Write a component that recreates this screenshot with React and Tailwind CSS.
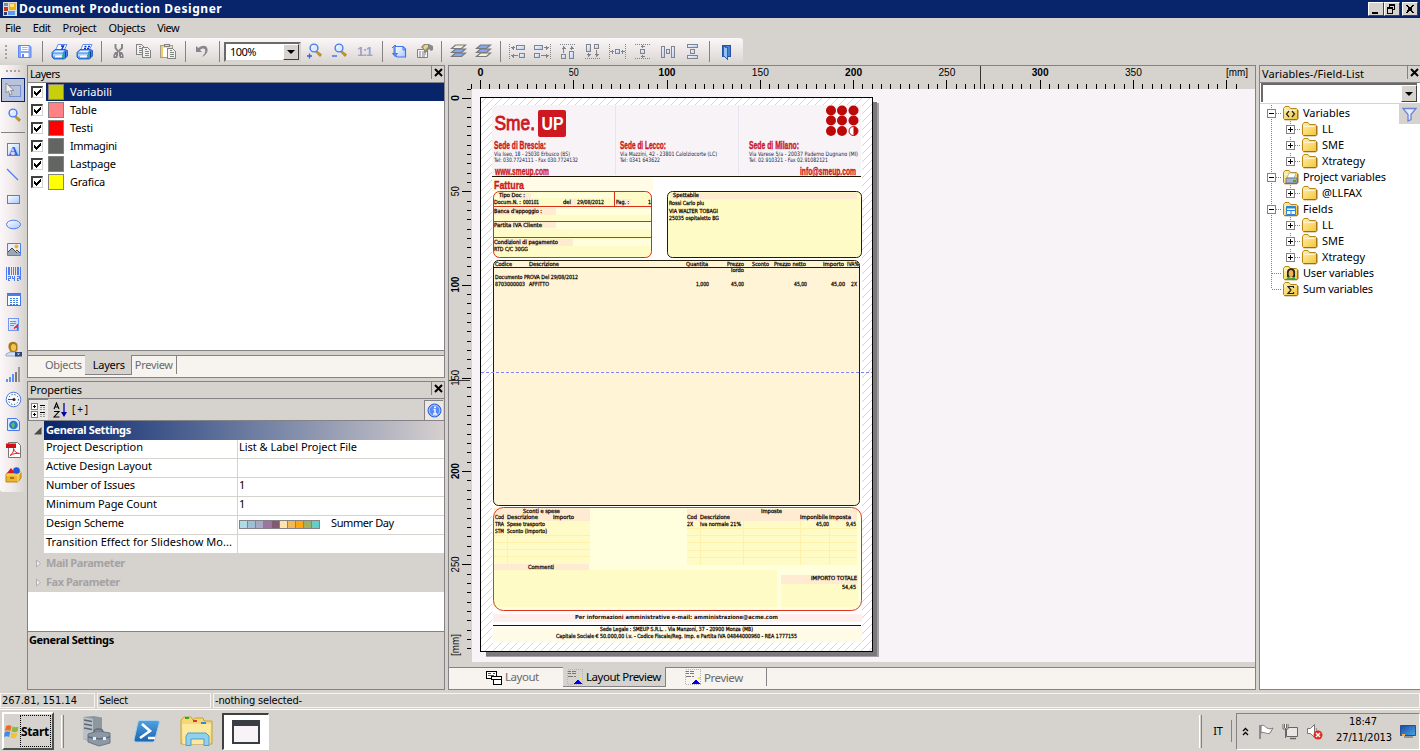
import React, { useLayoutEffect, useRef } from "react";

/* Label that spreads its letters so that the text takes `w` pixels. */
function T({ w, c = "", up = true, children }) {
  const ref = useRef(null);
  useLayoutEffect(() => {
    const el = ref.current;
    el.style.letterSpacing = "0px";
    const n = String(children).length;
    if (w && n > 1) el.style.letterSpacing = (w - el.getBoundingClientRect().width) / (n - 0.5) + "px";
  });
  return <span ref={ref} className={"inline-block shrink-0 whitespace-pre " + (up ? "-translate-y-px " : "") + c}>{children}</span>;
}

const Svg = ({ w = 17, h = 17, crisp = true, c = "", children }) => (
  <svg width={w} height={h} viewBox={`0 0 ${w} ${h}`} className={"shrink-0 block " + c} shapeRendering={crisp ? "crispEdges" : "auto"} fill="none">{children}</svg>
);

const Defs = () => (
  <svg width="0" height="0" className="absolute">
    <defs>
      <linearGradient id="bl" x1="0" y1="0" x2="1" y2="1"><stop offset="0" stopColor="#fff" /><stop offset="1" stopColor="#a9c6fb" /></linearGradient>
      <linearGradient id="fold" x1="0" y1="0" x2="1" y2="1"><stop offset="0" stopColor="#fff3ac" /><stop offset="1" stopColor="#f2c53c" /></linearGradient>
      <linearGradient id="ps" x1="0" y1="0" x2="0" y2="1"><stop offset="0" stopColor="#4fa3df" /><stop offset="1" stopColor="#1d63ae" /></linearGradient>
      <linearGradient id="scr" x1="0" y1="0" x2="1" y2="1"><stop offset="0" stopColor="#1b49a0" /><stop offset="1" stopColor="#4aa6ea" /></linearGradient>
    </defs>
  </svg>
);

/* ---------- toolbar icons ---------- */
const Save = () => <Svg crisp={false}><path d="M2.500 2.500h11l1.500 1.500v10.500h-12.500z" fill="#8aa8f6" stroke="#5c86f2" /><path d="M5 3h7.500v5H5z" fill="#fff" /><path d="M6 4.500h5.500M6 6.500h5.500" stroke="#9db6f6" /><path d="M5 10h7.500v4H5z" fill="#fff" /><path d="M6 11h2v3H6z" fill="#5c86f2" /></Svg>;
const Printer = ({ n }) => (
  <Svg crisp={false}>
    <path d="M4.500 7.500L7 1.500h9l-3 6z" fill="#fff" stroke="#5b90ee" />
    {n ? <path d="M8.500 3.500h2M12 3.500h2M8 5.500h2M11 5.500h2" stroke="#0d2fd0" strokeWidth="1.400" /> : <path d="M10 3h2.500l-2 4" stroke="#0d2fd0" strokeWidth="1.500" />}
    <path d="M1 9.500l3-3h10l2.500 1v5.500l-3 3H3l-2-2z" fill="#3f86ee" stroke="#1550b8" strokeWidth=".8" />
    <path d="M2 9.500l2.500-2h9l-2 2z" fill="#e4f0ff" /><path d="M2 10.500h10v3H2z" fill="#a9d0ff" /><path d="M3.500 14.500l1-2h7l-1 2z" fill="#fff" /><path d="M11 11.500h2.500v2H11z" fill="#22c83e" /><path d="M14.500 8.500v6" stroke="#123f98" />
  </Svg>
);
const Cut = () => <Svg crisp={false}><path d="M5.500 1v4l3 4M12 1v4L8 9" stroke="#88888c" strokeWidth="2" /><path d="M5 9h3v3.500l-1 2.500H3.500v-3zM9 9h3l1.500 3v3H10l-1-2.500z" fill="#808084" /><path d="M5 12.500h1M11 12.500h1" stroke="#e8e5e3" strokeWidth="1.300" /></Svg>;
const Sheet = ({ x, y }) => <g><path d={`M${x} ${y}h5l3 3v7h-8z`} fill="#f2f0ee" stroke="#848484" /><path d={`M${x + 2} ${y + 2}h2M${x + 2} ${y + 4}h4M${x + 2} ${y + 6}h4M${x + 2} ${y + 8}h4`} stroke="#848484" /></g>;
const Copy = () => <Svg><Sheet x={1.5} y={1.500} /><Sheet x={7.5} y={4.5} /></Svg>;
const Paste = () => <Svg><path d="M.5 2.500h12v12H.5z" fill="#e9e2cb" stroke="#a39d8c" /><path d="M1.500 3v11" stroke="#f5cb63" strokeWidth="2" /><path d="M3 5h8v9H3z" fill="#fff" /><path d="M4.500 1.500h5v2h-5z" fill="#ddd" stroke="#808080" /><Sheet x={7.5} y={5.5} /></Svg>;
const Undo = () => <Svg crisp={false}><path d="M2 3v6h6L6 7c2-2 4-2 5-.5 1 2-.5 4.500-3 7.500 4-2 6-4.500 5.500-8C13 2 8 1.500 4.500 5z" fill="#86868c" /></Svg>;
const Lens = ({ sign }) => (
  <Svg crisp={false}>
    <path d="M11 8l4.500 3.500-1.500 2L10 9.500z" fill="#c59a24" stroke="#8a6a14" strokeWidth=".6" />
    <circle cx="8" cy="5" r="3.900" fill="#dcecff" stroke="#4b7af2" strokeWidth="1.400" /><path d="M6 5a2 2 0 0 1 2-2" stroke="#fff" />
    {sign && <path d={sign === "+" ? "M1 13h5M3.500 10.500v5" : "M1 13h5"} stroke="#2f64e6" strokeWidth="1.300" />}
  </Svg>
);
const OneOne = () => <span className="text-[12px] font-bold leading-none text-[#97a2c4] font-['Liberation_Sans',sans-serif]"><T w={15} up={false}>1:1</T></span>;
const PageSetup = () => <Svg crisp={false}><path d="M4 3.500h8l2.500 2.500v8H6l-2-2z" fill="url(#bl)" stroke="#3e74ee" strokeWidth="1.200" /><path d="M1 5l3-3 2 2M1.500 10.500h5l-2.500 3zM3 4v8" stroke="#3e74ee" /><path d="M12 4v3h3" stroke="#3e74ee" /></Svg>;
const Props = () => <Svg crisp={false}><path d="M1.500 6.500h10v8h-10z" fill="#f5f5f5" stroke="#808080" /><path d="M3 9h2M6 9h4M3 11h2M6 11h4M3 13h2M6 13h3" stroke="#808080" /><path d="M5 4l3-3h5l4 2v4l-2 1-2-2-2 3-3 1V7l-2-2z" fill="#8a8a85" /><path d="M7 4l2-2h3v2l-3 3z" fill="#f3d27a" /></Svg>;
const Stack = ({ top }) => <Svg crisp={false}>{[11, 7, 3].map((y, i) => <path key={y} d={`M1.500 ${y + 2.500}l4-3.500h10l-4 3.500z`} fill={(top ? i === 0 : i === 2) ? "#f6efd6" : "#86a6ee"} stroke="#77797d" strokeWidth="1.200" />)}</Svg>;
const G = "#808488";
const Align = ({ k }) => {
  const dot = { stroke: G, strokeDasharray: "1 1" };
  const box = (x, y, w, h) => <rect key={`${x}-${y}`} x={x + .5} y={y + .5} width={w - 1} height={h - 1} fill="url(#bl)" stroke={G} />;
  const kids = {
    l: <><path d="M.5 1v15" {...dot} />{box(7, 2, 9, 5)}{box(10, 10, 6, 5)}<path d="M2 4.500h4M4.500 2.500v4M3.500 3.500v2M2 12.500h7M4.500 10.500v4M3.500 11.500v2" stroke={G} /></>,
    r: <><path d="M16.500 1v15" {...dot} />{box(0, 2, 9, 5)}{box(0, 10, 6, 5)}<path d="M10 4.500h5M12.500 2.500v4M13.500 3.500v2M7 12.500h8M12.500 10.500v4M13.500 11.500v2" stroke={G} /></>,
    t: <><path d="M1 1.500h15" {...dot} />{box(2, 11, 5, 5)}{box(10, 8, 5, 8)}<path d="M4.500 3v7M2.500 5.500h4M3.500 4.500h2M12.500 3v4M10.500 5.500h4M11.500 4.500h2" stroke={G} /></>,
    b: <><path d="M1 15.500h15" {...dot} />{box(2, 1, 5, 8)}{box(10, 1, 5, 5)}<path d="M4.500 10v4M2.500 11.500h4M3.500 12.500h2M12.500 7v7M10.500 11.500h4M11.500 12.500h2" stroke={G} /></>,
    ch: <><path d="M.5 1v15M16.500 1v15" {...dot} />{box(6, 6, 5, 5)}<path d="M1 8.500h4M12 8.500h4M3.500 6.500v4M13.500 6.500v4" stroke={G} /></>,
    cv: <><path d="M1 1.500h15M1 15.500h15" {...dot} />{box(6, 6, 5, 5)}<path d="M8.500 2v3M8.500 12v3M6.500 3.500h4M6.500 13.500h4" stroke={G} /></>,
    dh: <>{box(2, 3, 4, 12)}{box(12, 3, 4, 12)}{box(7, 6, 4, 5)}</>,
    dv: <>{box(3, 1, 11, 4)}{box(3, 12, 11, 4)}{box(6, 6, 5, 5)}</>,
  };
  return <Svg>{kids[k]}</Svg>;
};
const Door = () => <Svg><path d="M4.500 2.500h8v11h-8z" fill="#4a7fd6" stroke="#20549f" /><path d="M5.500 3l4 2v11l-4-3z" fill="#8fc3f5" stroke="#2b62b5" /></Svg>;

/* ---------- object palette icons ---------- */
const B = "#4f7df0";
const palette = [
  <Svg><path d="M2.500 2.500h12v12h-12z" fill="url(#bl)" stroke={B} /><text x="8.500" y="13.500" textAnchor="middle" fontSize="13" fontWeight="bold" fontFamily="Liberation Serif, serif" fill="#2f5fd8">A</text></Svg>,
  <Svg crisp={false}><path d="M2 3l11 11" stroke={B} strokeWidth="1.200" /></Svg>,
  <Svg><path d="M2.500 4.500h12v8h-12z" fill="url(#bl)" stroke={B} /></Svg>,
  <Svg crisp={false}><ellipse cx="8.500" cy="8.500" rx="7" ry="4.300" fill="url(#bl)" stroke={B} /></Svg>,
  <Svg crisp={false}><path d="M2.500 2.500h13v12h-13z" fill="#e8f0ff" stroke={B} /><path d="M3 14v-3l4-4 4 4 2-1 2 2v2z" fill="#9aa7b8" /><path d="M3 11l4-4 5 5M10 11l2-2 3 3" stroke="#444" /><circle cx="11.500" cy="5.500" r="2" fill="#efb51e" /></Svg>,
  <Svg><path d="M1.500 1v13M15.500 1v13M6.500 1v8M10.500 1v8" stroke={B} /><path d="M4 1v8M13 1v8" stroke={B} strokeWidth="2" /><path d="M8.500 1v8" stroke={B} /><path d="M3 10.500h2v2h-2v2h2M7.500 10v2.500h2M9.500 10v5M12 10.500h2v2h-2v2h2" stroke={B} /></Svg>,
  <Svg><path d="M2.500 2.500h13v12h-13z" fill="#fff" stroke="#3f74e8" /><path d="M2 3.500h14" stroke={B} strokeWidth="2" /><path d="M5 7.500h9M5 9.500h9M5 11.500h9M5 13h9" stroke="#3e82e0" strokeDasharray="2 1" /></Svg>,
  <Svg><path d="M3.500 2.500h10v12h-10z" fill="url(#bl)" stroke="#7596ee" /><path d="M5 5.500h6M5 7.500h6M5 9.500h4" stroke="#6c8ce0" /><path d="M8.500 13.500l4-5v5M9.500 11.500h3" stroke="#e33" /></Svg>,
  <Svg crisp={false}><path d="M3.500 7V4.500c0-5 9-5 9 0V9l-2 2h-5z" fill="#a87a12" /><ellipse cx="8.500" cy="6.500" rx="2.600" ry="3.600" fill="#f3c35a" /><path d="M1 15v-2l4-2h7l2 1v3z" fill="#cfe0f7" stroke="#7e93b4" strokeWidth=".7" /><path d="M10 11h7v4.500h-7z" fill="#2b4a7c" /><path d="M12 12.500h3l-1.500 1.500z" fill="#fff" /></Svg>,
  <Svg><path d="M1 13h2v3H1zM4 11h2v5H4zM7 8h2v8H7z" fill="#5b94f2" /><path d="M10 6h2v10h-2z" fill="#777" /><path d="M13 1h2v15h-2z" fill="#999" /></Svg>,
  <Svg crisp={false}><circle cx="8.500" cy="8.500" r="7.300" fill="#f6faff" stroke="#4a7de6" /><circle cx="8.500" cy="8.500" r="5" stroke="#222" strokeDasharray="1 2" /><path d="M3 8.500h7" stroke="#d11" /><circle cx="9" cy="8.500" r="1.500" fill="#222" /></Svg>,
  <Svg crisp={false}><path d="M2.500 2.500h9l3 3v9h-12z" fill="#dbe8ff" stroke="#4c77e6" /><circle cx="8.500" cy="9" r="4.300" fill="#2b75cf" /><path d="M6 8l3-2 1 3-2 4z" fill="#51c45f" /></Svg>,
  <Svg crisp={false}><path d="M3.500 1.500h9l3 3v12h-12z" fill="#fff" stroke="#777" /><path d="M1 2.500h10v4.500H1z" fill="#d40f14" /><path d="M5 14.500c3-2 4-5 3.500-7 1 3 3 5 6 5-3-.5-6 0-9.500 2z" stroke="#e02020" /></Svg>,
  <Svg crisp={false}><path d="M1 8l3-2h12v6l-3 4H1z" fill="#eeb62e" stroke="#a87408" strokeWidth=".8" /><path d="M1 9h12l3-3M13 9v7" stroke="#fbe08b" /><path d="M2 7l4-5 4 5z" fill="#d81c1c" /><circle cx="11.500" cy="4.500" r="3.300" fill="#2156d8" /><path d="M5 12h4" stroke="#a87408" strokeWidth="2" /></Svg>,
];

const Sep = ({ w }) => <div className={"flex h-full shrink-0 justify-center " + w}><div className="my-[3px] w-px bg-[#848284]" /></div>;
const Cell = ({ children }) => <div className="flex h-full w-[25px] shrink-0 items-center justify-center">{children}</div>;
const DropBtn = () => (
  <div className="flex w-[16px] shrink-0 items-center justify-center border border-t-white border-l-white border-r-[#404040] border-b-[#404040] bg-[#d6d3ce]">
    <div className="h-0 w-0 border-x-4 border-t-4 border-x-transparent border-t-black" />
  </div>
);
const Close = () => <Svg w={9} h={9} crisp={false}><path d="M1 1l7 7M8 1L1 8" stroke="#000" strokeWidth="2" /></Svg>;
const PanelHead = ({ w, children }) => (
  <div className="flex h-[18px] shrink-0 items-center border-y border-[#848284] bg-[#d6d3ce] pl-[2px]">
    <T w={w}>{children}</T>
    <div className="ml-auto flex h-[13px] w-[13px] items-center border-l border-[#848284] self-start pl-[2px]"><Close /></div>
  </div>
);

const WinBtn = ({ children, c = "" }) => (
  <div className={"flex h-[14px] w-[16px] border border-t-white border-l-white border-r-[#404040] border-b-[#404040] bg-[#d6d3ce] " + c}><Svg w={14} h={12}>{children}</Svg></div>
);

function TopBars() {
  return (
    <>
      <div className="flex h-[18px] shrink-0 items-center bg-[#08246b] pr-[2px] pl-[3px] text-white">
        <Svg w={14} h={14}><path d="M0 0h14v14H0z" fill="#ddd" /><path d="M1 1h4v3H1z" fill="#7b8da8" /><path d="M6 1h7v7H6z" fill="#f2b40f" /><path d="M7 2h4v3H7z" fill="#ffe27a" /><path d="M1 5h4v4H1z" fill="#c33a14" /><path d="M5 9h7v4H5z" fill="#5c9cf0" /><path d="M1 10h3v3H1z" fill="#333a70" /></Svg>
        <div className="ml-[2px] text-[12px] leading-[16px] font-bold"><T w={203} up={false}>Document Production Designer</T></div>
        <div className="ml-auto flex">
          <WinBtn><path d="M3 9h6v2H3z" fill="#000" /></WinBtn>
          <WinBtn><path d="M4 1.500h6M4 2h6M9.500 2v5M4.500 2v2M8 6.500h2M2 4.500h6M2 5h6M2.500 5v5.500h5V5" stroke="#000" /></WinBtn>
          <WinBtn c="ml-[2px]"><path d="M3 2l7 8M4 2l7 8M10 2L3 10M11 2L4 10" stroke="#000" /></WinBtn>
        </div>
      </div>
      <div className="flex h-[20px] shrink-0 items-center bg-[#d6d3ce] pl-[5px]">
        <T w={16}>File</T><T w={18} c="ml-[12px]">Edit</T><T w={34} c="ml-[12px]">Project</T><T w={37} c="ml-[12px]">Objects</T><T w={22} c="ml-[12px]">View</T>
      </div>
      <div className="flex h-[27px] w-[743px] shrink-0 items-center rounded-r-[3px] bg-linear-to-b from-[#fbf6f7] via-[#ebe6e5] to-[#d6d3ce]">
        <div className="ml-[4px] flex w-[8px] shrink-0 flex-col gap-[2px] pl-px">{[0, 1, 2, 3].map(i => <div key={i} className="h-[2px] w-[2px] bg-[#a5a2a0]" />)}</div>
        <Cell><Save /></Cell><Sep w="w-[10px]" />
        <Cell><Printer /></Cell><Cell><Printer n /></Cell><Sep w="w-[9px]" />
        <Cell><Cut /></Cell><Cell><Copy /></Cell><Cell><Paste /></Cell><Sep w="w-[9px]" />
        <Cell><Undo /></Cell><Sep w="w-[9px]" />
        <div className="mr-px flex h-[20px] w-[77px] shrink-0 border-2 border-t-[#6a6a6a] border-l-[#6a6a6a] border-r-[#d6d3ce] border-b-[#d6d3ce] bg-white">
          <div className="flex flex-1 items-center pl-[4px]"><T w={26} up={false}>100%</T></div><DropBtn />
        </div>
        <Cell><Lens sign="+" /></Cell><Cell><Lens sign="-" /></Cell><Cell><OneOne /></Cell><Sep w="w-[10px]" />
        <Cell><PageSetup /></Cell><Cell><Props /></Cell><Sep w="w-[9px]" />
        <Cell><Stack /></Cell><Cell><Stack top /></Cell><Sep w="w-[9px]" />
        {["l", "r", "t", "b", "ch", "cv", "dh", "dv"].map(k => <Cell key={k}><Align k={k} /></Cell>)}
        <Sep w="w-[9px]" /><Cell><Door /></Cell>
      </div>
    </>
  );
}

function Palette() {
  return (
    <div className="flex h-[427px] w-[26px] shrink-0 flex-col items-center rounded-b-[3px] bg-linear-to-r from-[#fbf6f7] via-[#efe9ea] to-[#d6d3ce]">
      <div className="mt-[5px] mb-[6px] flex h-[2px] gap-[2px]">{[0, 1, 2, 3].map(i => <div key={i} className="h-[2px] w-[2px] bg-[#a5a2a0]" />)}</div>
      <div className="flex h-[24px] w-[24px] shrink-0 items-center justify-center border border-[#08246b] bg-[#b8c2da]"><Svg crisp={false}><path d="M4.500 3.500h11v11h-11z" stroke="#2e5fe0" strokeDasharray="1 1" /><path d="M1 1v10l2.500-2 1.500 4 2-1-1.500-3.500H9z" fill="#eee" stroke="#808080" strokeWidth=".8" /></Svg></div>
      <div className="flex h-[26px] shrink-0 items-center pt-[3px]"><Lens /></div>
      <div className="flex h-[9px] w-[24px] shrink-0 items-center"><div className="h-px w-full bg-[#848284]" /></div>
      {palette.map((p, i) => <div key={i} className="flex h-[25px] w-[25px] shrink-0 items-center justify-center">{p}</div>)}
    </div>
  );
}

const layers = [["Variabili", "bg-[#c6cf09]", 42], ["Table", "bg-[#ff8284]", 27], ["Testi", "bg-[#ff0000]", 23], ["Immagini", "bg-[#636563]", 47], ["Lastpage", "bg-[#636563]", 46], ["Grafica", "bg-[#ffff00]", 35]];

function LayersPanel() {
  return (
    <div className="flex h-[313px] shrink-0 flex-col border-r border-b border-l border-[#848284] bg-[#d6d3ce]">
      <PanelHead w={30}>Layers</PanelHead>
      <div className="flex h-[268px] flex-col border-b border-[#848284] bg-white">
        {layers.map(([name, col, w], i) => (
          <div key={name} className={"flex h-[18px] shrink-0 items-center " + (i ? "" : "bg-[#08246b] text-white")}>
            <div className="flex h-[18px] w-[18px] items-center bg-white pl-[3px]">
              <div className="border-t-2 border-l-2 border-r border-b border-t-[#404040] border-l-[#404040] border-[#d6d3ce] bg-white"><Svg w={9} h={9}><path d="M1 3v3l2 2 5-5V0L3 5z" fill="#000" /></Svg></div>
            </div>
            <div className={"ml-[2px] h-[16px] w-[16px] border border-[#848284] " + col} />
            <T w={w} c="ml-[6px]">{name}</T>
          </div>
        ))}
      </div>
      <div className="mt-[4px] flex h-[22px] border-t border-[#848284] bg-[#f7f3ee] text-[#6b696b]">
        <div className="pt-[2px] pl-[17px]"><T w={37}>Objects</T></div>
        <div className="ml-[3px] -mt-px h-[20px] w-[47px] border-r border-b border-[#848284] bg-[#d6d3ce] pt-[3px] pl-[8px] text-black"><T w={32}>Layers</T></div>
        <div className="h-[18px] w-[45px] border-r border-[#848284] pt-[2px] pl-[3px]"><T w={38}>Preview</T></div>
      </div>
    </div>
  );
}

const swatches = ["bg-[#addbe7]", "bg-[#a0bfd6]", "bg-[#a5aac9]", "bg-[#9c75a0]", "bg-[#845a73]", "bg-[#ffe3ad]", "bg-[#efb95a]", "bg-[#ffa510]", "bg-[#a0b060]", "bg-[#63cfc6]"];
const props = [["Project Description", 97, "List & Label Project File", 118], ["Active Design Layout", 106], ["Number of Issues", 89, "1"], ["Minimum Page Count", 111, "1"], ["Design Scheme", 78, "*"], ["Transition Effect for Slideshow Mo...", 186]];

function PropertiesPanel() {
  return (
    <div className="mt-[3px] flex h-[309px] shrink-0 flex-col border-r border-b border-l border-[#848284] bg-[#d6d3ce]">
      <PanelHead w={52}>Properties</PanelHead>
      <div className="flex h-[22px] shrink-0 items-center border-b border-[#848284] pr-px">
        <div className="flex h-[21px] w-[20px] items-center justify-center border-t border-l border-[#848284] bg-[#ebe9e6]"><Svg w={15} h={16}><path d="M.5 1.500h6v6h-6zM.5 9.500h6v6h-6z" fill="#fff" stroke="#848284" /><path d="M2 4.500h3M3.500 3v3M2 12.500h3M3.500 11v3M9 3.500h5M9 10.500h5" stroke="#000" /><path d="M9 5.500h5M9 7.500h5M9 12.500h5M9 14.500h5" stroke="#999" strokeDasharray="2 1" /></Svg></div>
        <Svg w={14} h={16} crisp={false} c="ml-[5px]"><path d="M1 7l2.500-6L6 7M2 5h3M1 9.500h5L1 15h5.500" stroke="#000" strokeWidth="1.100" /><path d="M11 1v12" stroke="#00a" strokeWidth="1.300" /><path d="M8 10h6l-3 5z" fill="#00a" /></Svg>
        <div className="ml-[5px] text-[10px]"><T w={17} up={false}>[+]</T></div>
        <div className="ml-auto flex h-[20px] w-[19px] items-center justify-center border-t border-l border-[#848284] bg-[#ebe9e6]"><Svg w={15} h={15} crisp={false}><circle cx="7.500" cy="7.500" r="6.500" fill="#5b8af5" stroke="#2c5ee0" /><circle cx="7.500" cy="7.500" r="5.300" stroke="#b9cdfb" /><path d="M6.500 6.500h1.500v4.500M6 11h4" stroke="#fff" strokeWidth="1.300" /><path d="M7 3.500h2v1.500H7z" fill="#fff" /></Svg></div>
      </div>
      <div className="flex h-[19px] shrink-0 items-center">
        <div className="flex w-[16px] justify-end pr-[2px]"><Svg w={8} h={8} crisp={false}><path d="M7.500 0v7.500H0z" fill="#4a4a4a" /></Svg></div>
        <div className="flex h-full flex-1 items-center bg-linear-to-r from-[#08246b] to-[#d6cfce] pl-[2px] font-bold text-white"><T w={85}>General Settings</T></div>
      </div>
      {props.map(([a, aw, b, bw]) => (
        <div key={a} className="flex h-[19px] shrink-0 pl-[16px]">
          <div className="w-[194px] border-r border-b border-[#d6d3ce] bg-white pl-[2px]"><T w={aw}>{a}</T></div>
          <div className="flex flex-1 border-b border-[#d6d3ce] bg-white pl-px">
            {b === "*" ? <><div className="mt-[4px] flex h-[9px] gap-px border border-[#848284] bg-[#848284]">{swatches.map(s => <div key={s} className={"h-[7px] w-[7px] " + s} />)}</div><T w={63} c="ml-[11px]">Summer Day</T></> : b && <T w={bw}>{b}</T>}
          </div>
        </div>
      ))}
      {[["Mail Parameter", 79], ["Fax Parameter", 74]].map(([t, w]) => (
        <div key={t} className="flex h-[19px] shrink-0 items-center pl-[7px] font-bold text-[#a5a2a5]"><Svg w={7} h={9} crisp={false}><path d="M1.500 1l4 3.500-4 3.500z" stroke="#b0aeb0" fill="#eee" /></Svg><T w={w} c="ml-[4px]">{t}</T></div>
      ))}
      <div className="h-[40px] shrink-0 border-b border-[#848284] bg-white" />
      <div className="pt-px pl-px font-bold"><T w={85}>General Settings</T></div>
    </div>
  );
}

/* ---------- document preview ---------- */
const R = "#ce1821", K = "#180c04";
/* x, centre y, width, text, bold */
const docText = [
  [499, 195, 26, "Tipo Doc :"], [494, 202, 27, "Docum.N. :"], [523, 202, 16, "000101"], [563, 202, 8, "del"], [577, 202, 27, "29/08/2012"], [616, 202, 13, "Pag. :"], [648, 202, 3, "1"],
  [494, 211, 48, "Banca d'appoggio :"], [494, 225, 48, "Partita IVA Cliente"], [494, 242, 64, "Condizioni di pagamento"], [494, 249, 34, "RTD C/C 30GG"],
  [673, 194.500, 26, "Spettabile"], [669, 203, 35, "Rossi Carlo plu"], [669, 210.500, 49, "VIA WALTER TOBAGI"], [669, 218, 50, "25035 ospitaletto BG"],
  [495, 264, 17, "Codice"], [529, 264, 30, "Descrizione"], [686, 264, 22, "Quantita"], [727, 264, 17, "Prezzo"], [731, 270, 13, "lordo"], [752, 264, 17, "Sconto"], [774, 264, 32, "Prezzo netto"], [823, 264, 21, "Importo"], [847, 264, 12, "IVA%"],
  [495, 277, 83, "Documento PROVA Del 29/08/2012"], [495, 284, 30, "8703000003"], [529, 284, 20, "AFFITTO"], [696, 284, 13, "1,000"], [731, 284, 13, "45,00"], [794, 284, 13, "45,00"], [831, 284, 14, "45,00"], [851, 284, 6, "2X"],
  [523, 511, 37, "Sconti e spese"], [495, 517, 9, "Cod"], [507, 517, 31, "Descrizione"], [553, 517, 21, "Importo"], [495, 524, 9, "TRA"], [507, 524, 38, "Spese trasporto"], [495, 531, 9, "STM"], [507, 531, 40, "Sconto (Importo)"], [528, 567, 26, "Commenti"],
  [761, 511, 21, "Imposte"], [687, 517, 10, "Cod"], [700, 517, 30, "Descrizione"], [800, 517, 28, "Imponibile"], [829, 517, 22, "Imposta"], [687, 524, 6, "2X"], [700, 524, 41, "Iva normale 21%"], [816, 524, 13, "45,00"], [846, 524, 10, "9,45"], [811, 578, 46, "IMPORTO TOTALE"], [842, 587, 14, "54,45"],
  [575, 617, 203, "Per informazioni amministrative e-mail: amministrazione@acme.com", 1], [600, 629, 153, "Sede Legale : SMEUP S.R.L. . Via Manzoni, 37 - 20900 Monza (MB)"], [556, 636, 241, "Capitale Sociale € 50.000,00 i.v. - Codice Fiscale/Reg. Imp. e Partita IVA 04844000960 - REA 1777155"],
];
const headText = [
  [494, 148.500, 52, "Sede di Brescia:", 10.500], [620, 148.500, 46, "Sede di Lecco:", 10.500], [749, 148.500, 50, "Sede di Milano:", 10.500], [495, 174.500, 54, "www.smeup.com", 10.500], [800, 174.500, 56, "info@smeup.com", 10.500], [494, 189, 30, "Fattura", 11],
];
const addr = [
  [494, 155.500, 76, "Via Iseo, 18 - 25030 Erbusco (BS)"], [494, 162, 84, "Tel: 030.7724111 - Fax 030.7724132"], [620, 155.500, 97, "Via Mazzini, 42 - 23801 Calolziocorte (LC)"], [620, 162, 40, "Tel: 0341 643622"], [749, 155.500, 109, "Via Varese 5/a - 20037 Paderno Dugnano (MI)"], [749, 162, 79, "Tel. 02.910321 - Fax 02.91082121"],
];
const fills = [
  [492, 105, 369, 71, "#f7f3f7"], [492, 178, 161, 13, "#fffbe7"],
  [493, 614, 369, 8, "#ffefec"], [493, 627, 369, 15, "#fffbe7"],
];
const inner = [
  [494, 193, 119, 5, "#ffffde"], [499, 193, 32, 6, "#ffebd2"], [494, 208, 157, 7, "#ffffde"], [494, 208, 62, 7, "#ffebd2"], [494, 222, 157, 7, "#ffffde"], [494, 222, 62, 6, "#ffebd2"], [494, 239, 157, 7, "#ffffde"], [494, 239, 79, 7, "#ffebd2"],
  [571, 199, 5, 6, "#ffebd2"], [616, 199, 15, 6, "#ffebd2"], [671, 193, 186, 6, "#ffebd2"],
];
const lower = [
  [494, 508, 96, 13, "#ffebd2"], [494, 521, 96, 43, "#fffbc6"], [494, 564, 95, 6, "#ffebd2"], [494, 570, 283, 37, "#fffbc6"],
  [687, 509, 170, 12, "#ffebd2"], [687, 521, 170, 44, "#fffbc6"], [781, 575, 77, 9, "#ffebd2"], [781, 584, 77, 23, "#fffbc6"],
];
const rects = list => list.map(([x, y, w, h, f], i) => <rect key={i} x={x} y={y} width={w} height={h} fill={f} shapeRendering="crispEdges" />);

function Invoice() {
  return (
    <svg width="394" height="556" viewBox="480 97 394 556" className="absolute top-0 left-0 block">
      <defs><pattern id="hatch" width="8" height="8" patternUnits="userSpaceOnUse"><path d="M-1 9L9-1M-1 1L1-1M7 9L9 7" stroke="#ced0ce" strokeWidth=".9" /></pattern></defs>
      <rect x="480.500" y="97.500" width="392" height="554" fill="#fff" stroke="#000" />
      <rect x="481" y="98" width="391" height="553" fill="url(#hatch)" />
      <rect x="492" y="105" width="370" height="538" fill="#fff" />
      {rects(fills)}
      <path d="M615.500 106v69M738.500 106v69" stroke="#e7e3ef" />
      <text x="494.500" y="130" fontSize="21" textLength="40.500" lengthAdjust="spacingAndGlyphs" fontFamily="Liberation Sans, sans-serif" fill={R} stroke={R} strokeWidth=".9">Sme.</text>
      <rect x="538" y="110" width="28" height="27" rx="2" fill={R} />
      <text x="541.500" y="129.500" fontSize="19" fontWeight="bold" textLength="22" lengthAdjust="spacingAndGlyphs" fontFamily="Liberation Sans, sans-serif" fill="#fff">UP</text>
      {[110.500, 120.500, 131].map((y, r) => [831, 842, 853.500].map((x, c) => r + c === 4
        ? <g key={x}><circle cx={x} cy={y} r="4.500" fill="#fff" stroke="#bd0808" /><path d={`M${x} ${y - 4.500}a4.500 4.500 0 0 1 0 9z`} fill="#bd0808" /></g>
        : <circle key={x} cx={x} cy={y} r="5" fill="#bd0808" />))}
      {headText.map(([x, y, w, t, s]) => <text key={t} x={x} y={y} fontSize={s} fontWeight="bold" textLength={w} lengthAdjust="spacingAndGlyphs" fontFamily="Liberation Sans, sans-serif" fill={R} stroke={R} strokeWidth=".35">{t}</text>)}
      {addr.map(([x, y, w, t]) => <text key={t} x={x} y={y} fontSize="6" textLength={w} lengthAdjust="spacingAndGlyphs" fontFamily="DejaVu Sans, sans-serif" fill="#14243c">{t}</text>)}
      <path d="M492 176.500h369M493 625.500h368" stroke="#181400" />
      <rect x="493.500" y="191.500" width="158" height="66" rx="6" fill="#fffbc6" />
      <rect x="667.500" y="191.500" width="194" height="66" rx="6" fill="#fffbc6" />
      {rects(inner)}
      <rect x="493.500" y="191.500" width="158" height="66" rx="6" fill="none" stroke="#d62e18" />
      <path d="M494 206.500h158M494 221.500h158M494 237.500h158M614.500 192v14" stroke="#d62e18" />
      <rect x="667.500" y="191.500" width="194" height="66" rx="5" fill="none" stroke="#211c08" />
      <rect x="493.500" y="260.500" width="366" height="245" rx="5" fill="#fff5d6" stroke="#211c08" />
      <path d="M494 267.500h366" stroke="#211c08" />
      <rect x="493.500" y="507.500" width="368" height="103" rx="10" fill="#ffffde" />
      {rects(lower)}
      <path d="M494 535.500h96M494 542.500h96M494 549.500h96M494 556.500h96M507.500 521v43M687 528.500h170M687 535.500h170M687 542.500h170M687 550.500h170M687 557.500h170M700.500 521v44M743.500 514v51M800.500 521v44M829.500 521v44" stroke="#fff0ac" />
      <rect x="493.500" y="507.500" width="368" height="103" rx="10" fill="none" stroke="#e0341c" />
      {docText.map(([x, y, w, t, b], i) => <text key={i} x={x} y={y + 2} fontSize="5.600" fontWeight={b ? "bold" : "normal"} textLength={w} lengthAdjust="spacingAndGlyphs" fontFamily="DejaVu Sans, sans-serif" fill={K} stroke={K} strokeWidth={b ? 0 : .3}>{t}</text>)}
      <path d="M481 372.500h391" stroke="#8486f7" strokeDasharray="3 2" />
    </svg>
  );
}

const MM = 1.8655;
function HRuler() {
  const ticks = Array.from({ length: 83 }, (_, i) => i - 1);
  return (
    <svg width="806" height="23" viewBox="449 66 806 23" className="block shrink-0 bg-[#d6d3ce]" fontFamily="Liberation Sans, sans-serif" fontSize="10.500" shapeRendering="crispEdges">
      {ticks.map(i => { const x = Math.round(480 + i * 5 * MM) + .5; return <path key={i} d={`M${x} 89v${i % 10 ? -5 : -9}`} stroke="#000" />; })}
      <path d="M980.500 66v23" stroke="#333" />
      {Array.from({ length: 8 }, (_, i) => <text key={i} x={480.500 + i * 50 * MM} y="76" textAnchor="middle" fontWeight={i % 2 ? "normal" : "bold"} textLength={i === 0 ? 6 : i === 1 ? 10 : 17} lengthAdjust="spacingAndGlyphs">{i * 50}</text>)}
      <text x="1226" y="76" textLength="22" lengthAdjust="spacingAndGlyphs">[mm]</text>
    </svg>
  );
}
function VRuler() {
  const ticks = Array.from({ length: 61 }, (_, i) => i - 1);
  return (
    <svg width="23" height="573" viewBox="449 89 23 573" className="block shrink-0 bg-[#d6d3ce]" fontFamily="Liberation Sans, sans-serif" fontSize="10" shapeRendering="crispEdges">
      {ticks.map(i => { const y = Math.round(98 + i * 5 * MM) + .5; return <path key={i} d={`M471 ${y}h${i % 10 ? -4 : -9}`} stroke="#000" />; })}
      <path d="M449 380.500h21" stroke="#333" />
      {Array.from({ length: 6 }, (_, i) => <text key={i} transform={`translate(458.5 ${98 + i * 50 * MM}) rotate(-90)`} textAnchor="middle" fontWeight={i % 2 ? "normal" : "bold"} textLength={i === 0 ? 6 : i === 1 ? 10 : 16} lengthAdjust="spacingAndGlyphs">{i * 50}</text>)}
      <text transform="translate(458.5 656) rotate(-90)" textLength="22" lengthAdjust="spacingAndGlyphs">[mm]</text>
    </svg>
  );
}

const ViewIcon = ({ pic }) => pic
  ? <Svg w={16} h={16}><path d="M.5.5h15v15H.5z" stroke="#b5b2b0" strokeDasharray="1 1" /><path d="M1 2.500h3M5 2.500h4M1 4.500h3M5 4.500h4M1 7.500h5M7 7.500h2" stroke="#777" /><path d="M7 15l2-3 2-1 2 2 2 2z" fill="#0000f0" /><path d="M13 8h2v2h-2z" fill="#ffef00" /></Svg>
  : <Svg w={16} h={16}><path d="M.5 1.500h10v7H.5z" fill="#fff" stroke="#000" /><path d="M2 3.500h3M7 3.500h2M2 5.500h6" stroke="#555" /><path d="M5.500 6.500h10v3h-10z" fill="#fff" stroke="#000" /><path d="M7.500 9.500h8v5h-8z" fill="#fff" stroke="#000" /></Svg>;

function Workspace() {
  return (
    <div className="ml-[3px] flex w-[808px] shrink-0 flex-col border border-[#848284]">
      <HRuler />
      <div className="flex h-[573px] shrink-0">
        <VRuler />
        <div className="relative flex-1 bg-[#f7f3f7]">
          <div className="absolute top-[14px] left-[14px] h-[554px] w-[393px] bg-[#a5a2a5]" />
          <div className="absolute top-[13px] left-[14px] h-[554px] w-[391px] bg-[#7b797b]" />
          <div className="absolute top-[8px] left-[8px] h-[556px] w-[394px]"><Invoice /></div>
        </div>
      </div>
      <div className="mt-[5px] flex h-[22px] border-t border-[#848284] bg-[#f7f3ee] text-[11.500px] text-[#6b696b]">
        <div className="flex w-[114px] items-center pb-[2px] pl-[37px]"><ViewIcon /><T w={34} c="ml-[3px]">Layout</T></div>
        <div className="-mt-px flex h-[20px] w-[103px] items-center border-r border-b border-[#848284] bg-[#d6d3ce] pl-[4px] text-black"><ViewIcon pic /><T w={75} c="ml-[3px]" up={false}>Layout Preview</T></div>
        <div className="flex h-[18px] w-[101px] items-center border-r border-[#848284] pl-[19px]"><ViewIcon pic /><T w={39} c="ml-[3px]" up={false}>Preview</T></div>
      </div>
    </div>
  );
}

/* ---------- variable tree ---------- */
const Folder = ({ k }) => (
  <Svg w={17} h={16} crisp={false}>
    <path d="M1.500 3.500l1.500-2h4l1.500 2h6l1 1v9l-1 1H2.500l-1-1z" fill="url(#fold)" stroke="#b98516" /><path d="M2.500 14.800h12.500l1-1V5" stroke="#8c6411" strokeWidth=".9" /><path d="M2.500 5.500h11" stroke="#fff6cf" />
    {k === "v" && <path d="M7 6l-2.500 3L7 12M10 6l2.500 3L10 12" stroke="#222" strokeWidth="1.200" />}
    {k === "p" && <><path d="M5 9l2-5h7l-2 5z" fill="#fff" stroke="#8aa" strokeWidth=".7" /><path d="M4 9h11v5H4z" fill="#a8b4c8" stroke="#667" strokeWidth=".7" /><path d="M11 11h3v2h-3z" fill="#2fb52f" /></>}
    {k === "f" && <><path d="M4.500 5.500h9v8h-9z" fill="#fff" stroke="#2a86d8" /><path d="M4 6.500h10" stroke="#2a86d8" strokeWidth="2" /><path d="M4 9.500h10M9 9v4" stroke="#2a86d8" /></>}
    {k === "u" && <><path d="M5 12V7c0-5 8-5 8 0v5z" fill="#222" /><ellipse cx="9" cy="8.500" rx="2.400" ry="3.500" fill="#efb24c" /><path d="M4 15l2-3.500 3 2 3-2 2 3.500z" fill="#35a52f" /></>}
    {k === "s" && <path d="M11.500 7V5.500H6L9 9l-3 3.500h5.500V11" stroke="#222" strokeWidth="1.200" />}
  </Svg>
);
const tree = [[0, "Variables", 47, "v"], [1, "LL", 0], [1, "SME", 22], [1, "Xtrategy", 43], [0, "Project variables", 83, "p"], [1, "@LLFAX", 40], [0, "Fields", 30, "f"], [1, "LL", 0], [1, "SME", 22], [1, "Xtrategy", 43], [0, "User variables", 71, "u", 1], [0, "Sum variables", 70, "s", 1]];
const Guide = ({ lvl, leaf, last }) => (
  <Svg w={lvl ? 38 : 19} h={16}>
    <path d={last ? "M8.500 0v8" : "M8.500 0v16"} stroke="#848284" strokeDasharray="1 1" />
    {lvl ? <path d="M27.500 0v8M28 8.500h9" stroke="#848284" strokeDasharray="1 1" /> : <path d="M9 8.500h9" stroke="#848284" strokeDasharray="1 1" />}
    {!leaf && <g transform={`translate(${lvl ? 19 : 0} 0)`}><path d="M4.500 4.500h8v8h-8z" fill="#fff" stroke="#848284" /><path d={lvl ? "M6 8.500h5M8.500 6v5" : "M6 8.500h5"} stroke="#000" /></g>}
  </Svg>
);

function Variables() {
  return (
    <div className="ml-[3px] flex flex-1 flex-col border-b border-l border-[#848284] bg-white">
      <PanelHead w={102}>Variables-/Field-List</PanelHead>
      <div className="flex h-[21px] shrink-0 border-b border-[#d6d3ce] pl-px pr-[3px]">
        <div className="flex h-[19px] flex-1 justify-end border-t-2 border-l-2 border-[#6b696b] bg-white"><DropBtn /></div>
      </div>
      <div className="flex flex-1">
        <div className="flex w-[139px] flex-col pt-px pl-[3px]">
          {tree.map(([lvl, t, w, k, leaf], i) => <div key={i} className="flex h-[16px] shrink-0 items-center"><Guide lvl={lvl} leaf={leaf} last={i === 11} /><Folder k={k} /><T w={w} c="ml-[4px]">{t}</T></div>)}
        </div>
        <div className="flex h-[20px] flex-1 items-center justify-center bg-[#d6d3ce]"><Svg w={15} h={15} crisp={false}><path d="M1 1.500h13L9 7.500v5L6 14V7.500z" fill="#e4ecff" stroke="#6b82d8" strokeWidth="1.300" /></Svg></div>
      </div>
    </div>
  );
}

/* ---------- task bar ---------- */
function Taskbar() {
  return (
    <div className="flex h-[43px] shrink-0 items-center border-t border-white bg-[#d6d3ce] font-['DejaVu_Sans_Condensed','DejaVu_Sans',sans-serif]">
      <div className="ml-[2px] flex h-[38px] w-[52px] shrink-0 items-center border-2 border-t-white border-l-white border-r-[#505050] border-b-[#505050]">
        <Svg w={16} h={15} crisp={false}><path d="M2 2c2-1 4-1 5.500 0L6.500 7C5 6 3 6 1 7z" fill="#ec6a28" /><path d="M8.500 2.500c2 1 4 1 6 0l-1 5c-2 1-4 1-6 0z" fill="#86bd38" /><path d="M.8 8c2-1 4-1 5.500 0L5 13c-1.500-1-3.500-1-5 0z" fill="#3e8de0" /><path d="M7.300 8.500c2 1 4 1 6 0l-1 5c-2 1-4 1-6 0z" fill="#fbc12c" /></Svg>
        <div className="flex h-[32px] w-[31px] items-center border border-dotted border-black text-[12px] font-bold font-['Noto_Sans',sans-serif]"><T w={28} up={false}>Start</T></div>
      </div>
      <div className="ml-[7px] h-[33px] w-[3px] border-l border-l-white border-r border-r-[#848284]" />
      <Svg w={30} h={34} crisp={false} c="ml-[18px]"><path d="M1 3l11-1 8 1.500v23l-9 2L1 25z" fill="#8d979e" /><path d="M1 3l10 2v22L1 25z" fill="#b9c2c8" /><path d="M2 6l8 1.500M2 10l8 1.500M2 14l8 1.500" stroke="#5d6870" strokeWidth="1.500" /><path d="M6 20l10-3 12 2v10l-11 3-11-4z" fill="#8b98a5" stroke="#6b7782" /><path d="M12 18c0-4 9-4 9 0M6 23l11 2 11-2" stroke="#5f6b76" strokeWidth="1.300" /><path d="M11 23h3v3h-3zM21 23h3v3h-3z" fill="#e8eef2" /></Svg>
      <Svg w={28} h={26} crisp={false} c="ml-[21px]"><path d="M6 2.500h19l1.500 1.500-5 19-1.500 1H2L1 22 5 4z" fill="url(#ps)" stroke="#a9cfec" /><path d="M9 6l8 7-10 7M15 20h7" stroke="#fff" strokeWidth="2.600" /></Svg>
      <Svg w={34} h={32} crisp={false} c="ml-[19px]"><path d="M1 5l3-3h7l2 3 2-2h8l1 3h8v23H1z" fill="#f5d873" stroke="#c9a232" /><path d="M2 9h29l-1 20H3z" fill="#fbe9a0" /><path d="M5 3h4" stroke="#2ca52c" strokeWidth="2" /><path d="M13 6h4" stroke="#d43b2b" strokeWidth="2" /><path d="M21 8h5" stroke="#2f8be0" strokeWidth="2" /><path d="M6 30.500V21l2-3h18l3 3v9.500h-5V24H11v6.500z" fill="#8fd0ee" stroke="#4d9fc8" /></Svg>
      <div className="ml-[8px] flex h-[37px] w-[47px] items-center justify-center border border-t-2 border-l-2 border-t-[#404040] border-l-[#404040] border-white bg-white"><div className="h-[24px] w-[28px] border-2 border-t-[6px] border-[#393c42] bg-[#f7f3f7]" /></div>
      <div className="ml-auto h-[33px] w-[3px] border-l border-l-white border-r border-r-[#848284]" />
      <div className="ml-[11px] font-['Noto_Sans',sans-serif]"><T>IT</T></div>
      <div className="ml-[8px] h-[22px] w-px bg-[#848284]" />
      <div className="ml-[4px] flex h-[37px] w-[184px] items-center border border-t-[#848284] border-l-[#848284] border-r-white border-b-white pl-[5px]">
        <Svg w={7} h={9} crisp={false}><path d="M1 4l2.500-2.500L6 4M1 8l2.500-2.500L6 8" stroke="#000" strokeWidth="1.300" /></Svg>
        <Svg w={17} h={17} crisp={false} c="ml-[9px]"><path d="M2 2v14" stroke="#777" strokeWidth="1.500" /><path d="M3 3c3-2 4 1 6 2s4 1 6 0l-3 5c-3 2-6-2-9 0z" fill="#fff" stroke="#777" /></Svg>
        <Svg w={17} h={17} crisp={false} c="ml-[7px]"><path d="M4.500 4.500h11v9h-11z" fill="#e8e6e4" stroke="#666" /><path d="M8 15.500h6" stroke="#666" strokeWidth="1.500" /><path d="M1 1v5h5V1M3.500 5v10M2.500 1v4M4.500 1v4" stroke="#666" fill="#fff" /></Svg>
        <Svg w={18} h={17} crisp={false} c="ml-[7px]"><path d="M1.500 5.500h3l4-4v13l-4-4h-3z" fill="#fff" stroke="#777" /><path d="M10 5c1 2 1 5 0 7" stroke="#888" /><circle cx="12" cy="12" r="4.500" fill="#dc2f23" /><path d="M10 10l4 4M14 10l-4 4" stroke="#fff" strokeWidth="1.400" /></Svg>
        <div className="ml-[12px] flex w-[56px] flex-col items-center leading-[16px]"><T w={28} c="-translate-x-px">18:47</T><T w={56}>27/11/2013</T></div>
        <Svg w={17} h={14} crisp={false} c="ml-[8px]"><path d="M.5 1.500h15v10H.5z" fill="url(#scr)" stroke="#2a4f88" /><path d="M2 10h3v2H2z" fill="#f3b13c" /><path d="M4 13h9" stroke="#555" /></Svg>
      </div>
    </div>
  );
}

export default function App() {
  return (
    <div className="flex h-[752px] w-[1420px] flex-col overflow-hidden bg-[#d6d3ce] text-[11px] leading-[15px] text-black font-['Noto_Sans',sans-serif]">
      <Defs />
      <TopBars />
      <div className="flex h-[625px] shrink-0">
        <Palette />
        <div className="ml-px flex w-[418px] shrink-0 flex-col"><LayersPanel /><PropertiesPanel /></div>
        <Workspace />
        <Variables />
      </div>
      <div className="flex h-[19px] shrink-0 items-start gap-[2px] pt-[3px] font-['DejaVu_Sans_Condensed','DejaVu_Sans',sans-serif]">
        <div className="h-[15px] w-[95px] border border-[#f5f4f2] pl-px leading-[13px]"><T w={75} up={false}>267.81, 151.14</T></div>
        <div className="h-[15px] w-[114px] border border-[#f5f4f2] pl-px leading-[13px]"><T w={29} up={false}>Select</T></div>
        <div className="h-[15px] flex-1 border border-[#f5f4f2] pl-px leading-[13px]"><T w={87} up={false}>-nothing selected-</T></div>
      </div>
      <Taskbar />
    </div>
  );
}
